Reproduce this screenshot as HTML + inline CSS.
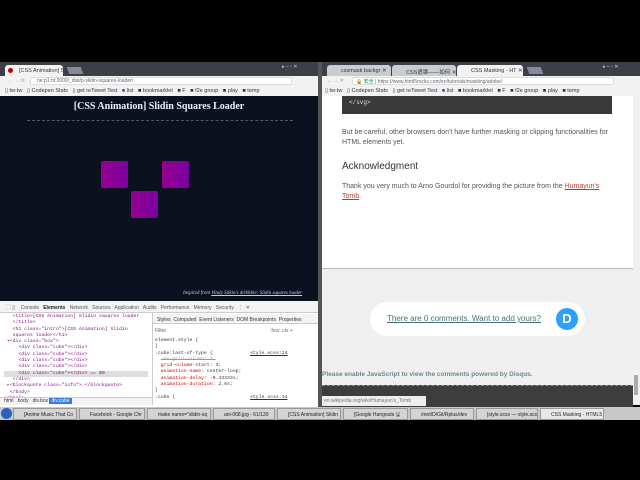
<!DOCTYPE html>
<html><head><meta charset="utf-8"><style>
*{margin:0;padding:0;box-sizing:border-box}
body{width:640px;height:480px;background:#000;position:relative;overflow:hidden;font-family:"Liberation Sans","Noto Sans CJK SC",sans-serif}
.a{position:absolute}
.t{white-space:nowrap;position:absolute}
.tab{position:absolute;top:65px;height:11px;font-size:5.5px;color:#333;padding:3px 0 0 14px;background:#c9ccd0;border-radius:3px 3px 0 0;white-space:nowrap;overflow:hidden}
.bm{font-size:5.5px;color:#333}
.mono{font-family:"Liberation Mono",monospace}
.sq{position:absolute;width:27px;height:27px;border-radius:2px;background:linear-gradient(90deg,#950090,#7a00a0)}
.tb{position:absolute;top:408px;height:12px;font-size:5px;color:#222;background:#d4d4d4;border:1px solid #999;padding:3px 0 0 10px;white-space:nowrap;overflow:hidden}
</style></head><body>
<!-- left window -->
<div class="a" style="left:0;top:62px;width:320px;height:14px;background:#3b4048"></div>
<div class="tab" style="left:5px;width:58px;background:#f2f2f2">[CSS Animation] S ✕</div>
<div class="a" style="left:8px;top:68px;width:5px;height:5px;border-radius:50%;background:#b00"></div>
<div class="a" style="left:68px;top:67px;width:14px;height:7px;background:#889;transform:skewX(20deg)"></div>
<div class="t" style="left:282px;top:64px;font-size:5px;color:#ccc">▸ ‒ ▫ ✕</div>
<div class="a" style="left:0;top:76px;width:320px;height:20px;background:#f2f2f2"></div>
<div class="a" style="left:30px;top:77px;width:262px;height:8px;background:#fff;border:1px solid #ddd;border-radius:2px"></div>
<div class="t" style="left:8px;top:78px;font-size:5px;color:#999">← → ⟳</div>
<div class="t" style="left:37px;top:78px;font-size:5px;color:#666">ne:p1:nt:3000/_dist/p-slidin-squares-loader/</div>
<div class="t bm" style="left:5px;top:88px">▯ tw-tw &nbsp; ▯ Codepen Stats &nbsp; ▯ get reTweet Test &nbsp; <span style="color:#3b5998">■</span> list &nbsp; ■ bookmarklet &nbsp; ■ F &nbsp; ■ f2e group &nbsp; ■ play &nbsp; ■ temp</div>
<div class="a" style="left:0;top:96px;width:318px;height:205px;background:#0c1120"></div>
<div class="t" style="left:0;width:318px;text-align:center;top:101px;font-family:'Liberation Serif',serif;font-weight:bold;font-size:10px;color:#eef">[CSS Animation] Slidin Squares Loader</div>
<div class="a" style="left:27px;top:120px;width:266px;border-top:1px dashed #556"></div>
<div class="sq" style="left:101px;top:161px"></div>
<div class="sq" style="left:162px;top:161px"></div>
<div class="sq" style="left:131px;top:191px"></div>
<div class="t" style="left:183px;top:291px;font-size:5px;font-style:italic;color:#ccd;font-family:'Liberation Serif',serif">Inspired from <u>Vitaly Silkin's dribbble: Slidin squares loader</u></div>
<div class="a" style="left:318px;top:62px;width:4px;height:345px;background:#555"></div>
<!-- devtools -->
<div class="a" style="left:0;top:301px;width:318px;height:106px;background:#fff"></div>
<div class="a" style="left:0;top:301px;width:318px;height:12px;background:#f3f3f3;border-bottom:1px solid #ccc"></div>
<div class="t" style="left:6px;top:304px;font-size:5px;color:#555">⬚ ▯ &nbsp;&nbsp; Console &nbsp; <b style="color:#222">Elements</b> &nbsp; Network &nbsp; Sources &nbsp; Application &nbsp; Audits &nbsp; Performance &nbsp; Memory &nbsp; Security &nbsp; ⋮ &nbsp;✕</div>
<div class="a mono" style="left:4px;top:314px;width:144px;font-size:4.8px;line-height:6.3px;color:#881280;white-space:pre">   &lt;title&gt;[CSS Animation] Slidin squares loader
   &lt;/title&gt;
   &lt;h1 class="intro"&gt;[CSS Animation] Slidin
   squares loader&lt;/h1&gt;
 ▾&lt;div class="box"&gt;
     &lt;div class="cube"&gt;&lt;/div&gt;
     &lt;div class="cube"&gt;&lt;/div&gt;
     &lt;div class="cube"&gt;&lt;/div&gt;
     &lt;div class="cube"&gt;&lt;/div&gt;
<span style="background:#ddd;display:inline-block;width:144px">     &lt;div class="cube"&gt;&lt;/div&gt; == $0</span>
   &lt;/div&gt;
 ▸&lt;blockquote class="info"&gt;…&lt;/blockquote&gt;
  &lt;/body&gt;
&lt;/html&gt;</div>
<div class="a" style="left:0;top:397px;width:152px;height:8px;background:#f3f3f3;border-top:1px solid #ccc"></div>
<div class="t" style="left:4px;top:398px;font-size:5px;color:#333">html &nbsp; body &nbsp; div.box <span style="background:#3879d9;color:#fff;padding:0 2px">div.cube</span></div>
<div class="a" style="left:152px;top:313px;width:1px;height:92px;background:#ccc"></div>
<div class="a" style="left:153px;top:314px;width:165px;height:10px;background:#f3f3f3;border-bottom:1px solid #ccc"></div>
<div class="t" style="left:157px;top:317px;font-size:5px;color:#333">Styles &nbsp;Computed &nbsp;Event Listeners &nbsp;DOM Breakpoints &nbsp;Properties</div>
<div class="t" style="left:155px;top:328px;font-size:5px;color:#666">Filter<span style="margin-left:104px">:hov .cls +</span></div>
<div class="a mono" style="left:155px;top:338px;width:160px;font-size:4.8px;line-height:6.3px;color:#333;white-space:pre">element.style {
}
.cube:last-of-type {             <u>style.scss:14</u>
  <s style="color:#999">-ms-grid-column: 3;</s>
  <span style="color:#c80000">grid-column-start</span>: 3;
  <span style="color:#c80000">animation-name</span>: center-loop;
  <span style="color:#c80000">animation-delay</span>: -0.43333s;
  <span style="color:#c80000">animation-duration</span>: 2.6s;
}
.cube {                          <u>style.scss:14</u></div>
<!-- right window -->
<div class="a" style="left:322px;top:62px;width:318px;height:14px;background:#3b4048"></div>
<div class="tab" style="left:327px;width:64px">cssmask backgr ✕</div>
<div class="tab" style="left:392px;width:64px">CSS遮罩——如何 ✕</div>
<div class="tab" style="left:457px;width:66px;background:#f2f2f2">CSS Masking - HT ✕</div>
<div class="a" style="left:528px;top:67px;width:14px;height:7px;background:#889;transform:skewX(20deg)"></div>
<div class="t" style="left:603px;top:64px;font-size:5px;color:#ccc">▸ ‒ ▫ ✕</div>
<div class="a" style="left:322px;top:76px;width:318px;height:20px;background:#f2f2f2"></div>
<div class="a" style="left:352px;top:77px;width:262px;height:8px;background:#fff;border:1px solid #ddd;border-radius:2px"></div>
<div class="t" style="left:327px;top:78px;font-size:5px;color:#999">← → ✕</div>
<div class="t" style="left:356px;top:78px;font-size:5px;color:#666"><span style="color:#0a8a3a">🔒 安全</span> | https://www.html5rocks.com/en/tutorials/masking/adobe/</div>
<div class="t bm" style="left:325px;top:88px">▯ tw-tw &nbsp; ▯ Codepen Stats &nbsp; ▯ get reTweet Test &nbsp; <span style="color:#3b5998">■</span> list &nbsp; ■ bookmarklet &nbsp; ■ F &nbsp; ■ f2e group &nbsp; ■ play &nbsp; ■ temp</div>
<div class="a" style="left:322px;top:96px;width:311px;height:172px;background:#fff"></div>
<div class="a" style="left:633px;top:96px;width:7px;height:309px;background:#f0f0f0"></div>
<div class="a" style="left:634px;top:375px;width:4px;height:20px;background:#aaa"></div>
<div class="a mono" style="left:342px;top:96px;width:270px;height:18px;background:#3a3a3a;color:#ddd;font-size:6px;padding:3px 0 0 7px">&lt;/svg&gt;</div>
<div class="t" style="left:342px;top:128px;font-size:7px;line-height:10px;color:#555;white-space:normal;width:275px">But be careful, other browsers don't have further masking or clipping functionalities for HTML elements yet.</div>
<div class="t" style="left:342px;top:161px;font-size:10px;color:#333">Acknowledgment</div>
<div class="t" style="left:342px;top:182px;font-size:7px;line-height:10px;color:#555">Thank you very much to Arno Gourdol for providing the picture from the <u style="color:#c0392b">Humayun's</u><br><u style="color:#c0392b">Tomb</u>.</div>
<div class="a" style="left:322px;top:268px;width:311px;height:117px;background:#efefef;border-top:1px solid #bbb"></div>
<div class="a" style="left:370px;top:302px;width:215px;height:34px;border-radius:17px;background:#fff"></div>
<div class="t" style="left:387px;top:314px;font-size:8px;color:#4a6e78;text-decoration:underline">There are 0 comments. Want to add yours?</div>
<div class="a" style="left:556px;top:308px;width:22px;height:22px;border-radius:50%;background:#2e9fff;color:#fff;font-weight:bold;font-size:13px;text-align:center;line-height:22px">D</div>
<div class="t" style="left:322px;top:371px;font-size:6.5px;font-weight:bold;color:#6b8a90">Please enable JavaScript to view the comments powered by Disqus.</div>
<div class="a" style="left:322px;top:385px;width:311px;height:22px;background:#3d3d3d;border-top:1px dashed #888"></div>
<div class="a" style="left:322px;top:396px;width:104px;height:10px;background:#eee;font-size:5px;color:#777;padding:2px 0 0 2px;white-space:nowrap">en.wikipedia.org/wiki/Humayun's_Tomb</div>
<!-- taskbar -->
<div class="a" style="left:0;top:407px;width:640px;height:13px;background:#c8c8c8"></div>
<div class="a" style="left:1px;top:408px;width:11px;height:11px;border-radius:50%;background:#2a62c0"></div>
<div class="tb" style="left:13px;width:64px">[Anime Music That Co</div>
<div class="tb" style="left:79px;width:66px">Facebook - Google Chr</div>
<div class="tb" style="left:147px;width:64px">make name="slidin-sq</div>
<div class="tb" style="left:213px;width:62px">ani-068.jpg - 61/130</div>
<div class="tb" style="left:277px;width:64px">[CSS Animation] Slidin</div>
<div class="tb" style="left:343px;width:65px">[Google Hangouts 🖫</div>
<div class="tb" style="left:410px;width:64px">/mnt/D/Git/Rplus/dev</div>
<div class="tb" style="left:476px;width:62px">[style.scss — style.scs</div>
<div class="tb" style="left:540px;width:64px;background:#e8e8e8">CSS Masking - HTML5</div>
<div class="a" style="left:0;top:420px;width:640px;height:60px;background:#000"></div>
</body></html>
